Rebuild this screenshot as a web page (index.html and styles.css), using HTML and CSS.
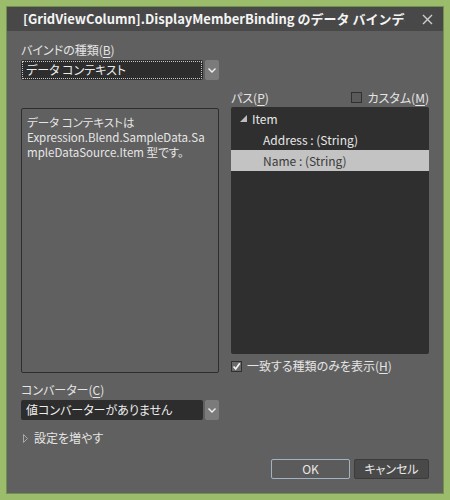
FILE: index.html
```html
<!DOCTYPE html>
<html lang="ja">
<head>
<meta charset="utf-8">
<link rel="stylesheet" href="styles.css">
</head>
<body>
<div class="window">
  <div class="frame">
    <div class="titlebar">
      <div class="title">[GridViewColumn].DisplayMemberBinding のデータ バインディング</div>
      <div class="close">
        <svg width="11" height="11" viewBox="0 0 11 11"><path d="M1 1 L10 10 M10 1 L1 10" stroke="#cfcfcf" stroke-width="1.4" fill="none"/></svg>
      </div>
    </div>
    <div class="body">
      <div class="label">バインドの種類(<u>B</u>)</div>
      <div class="combo focused">
        <div class="field">データ コンテキスト</div>
        <div class="drop"><svg width="8" height="5" viewBox="0 0 8 5"><path d="M0.5 0.5 L4 4 L7.5 0.5" stroke="#f0f0f0" stroke-width="1.4" fill="none"/></svg></div>
      </div>
      <div class="middle">
        <div class="left">
          <div class="desc">
            <span class="line">データ コンテキストは</span>
            <span class="line">Expression.Blend.SampleData.Sa</span>
            <span class="line">mpleDataSource.Item 型です。</span>
          </div>
        </div>
        <div class="right">
          <div class="pathhead">
            <span>パス(<u>P</u>)</span>
            <span class="check"><span class="box"></span><span>カスタム(<u>M</u>)</span></span>
          </div>
          <div class="tree">
            <div class="row"><svg class="tri" width="7" height="7" viewBox="0 0 7 7"><path d="M7 0 L7 7 L0 7 Z" fill="#bdbdbd"/></svg><span>Item</span></div>
            <div class="row child">Address : (String)</div>
            <div class="row child selected">Name : (String)</div>
          </div>
          <div class="check matchrow"><span class="box checked"><svg width="9" height="9" viewBox="0 0 9 9"><path d="M1.5 4.5 L3.7 7 L7.8 1.2" stroke="#f4f4f4" stroke-width="1.7" fill="none"/></svg></span><span>一致する種類のみを表示(<u>H</u>)</span></div>
        </div>
      </div>
      <div class="label conv">コンバーター(<u>C</u>)</div>
      <div class="combo">
        <div class="field">値コンバーターがありません</div>
        <div class="drop"><svg width="8" height="5" viewBox="0 0 8 5"><path d="M0.5 0.5 L4 4 L7.5 0.5" stroke="#f0f0f0" stroke-width="1.4" fill="none"/></svg></div>
      </div>
      <div class="expander"><svg width="5" height="9" viewBox="0 0 5 9"><path d="M0.5 0.5 L4.5 4.5 L0.5 8.5 Z" stroke="#a8a8a8" stroke-width="1" fill="none"/></svg><span>設定を増やす</span></div>
      <div class="buttons">
        <div class="btn ok">OK</div>
        <div class="btn cancel">キャンセル</div>
      </div>
    </div>
  </div>
</div>
</body>
</html>
```

FILE: styles.css
```css
html, body {
  margin: 0;
  padding: 0;
}
body {
  width: 450px;
  height: 500px;
  font-family: "Noto Sans CJK JP", "Noto Sans", sans-serif;
  font-feature-settings: "palt";
  font-size: 12px;
  color: #e4e4e4;
}
u {
  text-decoration: underline;
  text-underline-offset: 2px;
}
.window {
  width: 450px;
  height: 500px;
  box-sizing: border-box;
  padding: 6px;
  background: #9bbd6b;
}
.frame {
  height: 100%;
  box-sizing: border-box;
  border: 1px solid #71904e;
  background: #606060;
  display: flex;
  flex-direction: column;
}
.titlebar {
  height: 24px;
  flex: none;
  background: #484848;
  display: flex;
  align-items: center;
  padding: 0 10px 0 16px;
}
.title {
  width: 382px;
  overflow: hidden;
  white-space: nowrap;
  font-weight: bold;
  font-size: 13px;
  line-height: 24px;
  color: #f4f4f4;
  font-feature-settings: normal;
}
.close {
  margin-left: auto;
  width: 11px;
  height: 11px;
  display: flex;
}
.body {
  flex: 1;
  padding: 11px 14px 0 14px;
  display: flex;
  flex-direction: column;
}
.label {
  line-height: 16px;
  height: 16px;
}
.combo {
  display: flex;
  width: 198px;
  height: 20px;
  margin-top: 2px;
  gap: 2px;
}
.combo .field {
  flex: 1;
  background: #2d2d2d;
  border-radius: 2px;
  padding-left: 5px;
  line-height: 20px;
  color: #ececec;
}
.combo.focused .field {
  outline: 1px dotted #c8c8c8;
  outline-offset: -2px;
}
.combo .drop {
  width: 14px;
  background: #7b7b7b;
  border-radius: 2px;
  display: flex;
  align-items: center;
  justify-content: center;
}
.middle {
  display: grid;
  grid-template-columns: 198px 1fr;
  column-gap: 12px;
  margin-top: 8px;
}
.left {
  padding-top: 20px;
}
.desc {
  height: 265px;
  box-sizing: border-box;
  border: 1px solid #2e2e2e;
  border-radius: 2px;
  padding: 6px 5px;
  display: flex;
  flex-direction: column;
  font-size: 11.5px;
  line-height: 15px;
  color: #e6e6e6;
}
.line {
  white-space: nowrap;
}
.pathhead {
  height: 19px;
  display: flex;
  justify-content: space-between;
  align-items: center;
  line-height: 16px;
}
.check {
  display: flex;
  align-items: center;
  gap: 5px;
}
.box {
  width: 9px;
  height: 9px;
  border: 1px solid #303030;
  background: #5a5a5a;
  display: flex;
  align-items: center;
  justify-content: center;
}
.box.checked {
  background: #6a6a6a;
}
.tree {
  height: 247px;
  box-sizing: border-box;
  background: #2f2f2f;
  border-radius: 2px;
  padding-top: 1px;
  color: #e8e8e8;
}
.row {
  height: 21px;
  line-height: 21px;
  display: flex;
  align-items: center;
  padding-left: 9px;
}
.tri {
  margin-right: 5px;
}
.row.child {
  padding-left: 32px;
}
.row.selected {
  background: #c3c3c3;
  color: #3a3a3a;
}
.matchrow {
  margin-top: 6px;
  height: 12px;
  line-height: 12px;
}
.conv {
  margin-top: 9px;
}
.expander {
  margin-top: 10px;
  height: 16px;
  line-height: 16px;
  display: flex;
  align-items: center;
  gap: 6px;
  padding-left: 2px;
}
.buttons {
  display: flex;
  justify-content: flex-end;
  gap: 4px;
  margin-top: 13px;
}
.btn {
  height: 20px;
  box-sizing: border-box;
  line-height: 18px;
  text-align: center;
  border-radius: 2px;
  color: #e8e8e8;
}
.btn.ok {
  width: 79px;
  background: #5b5b5b;
  border: 1px solid #9fb3c4;
}
.btn.cancel {
  width: 75px;
  background: #494949;
  border: 1px solid #3c3c3c;
}
```
